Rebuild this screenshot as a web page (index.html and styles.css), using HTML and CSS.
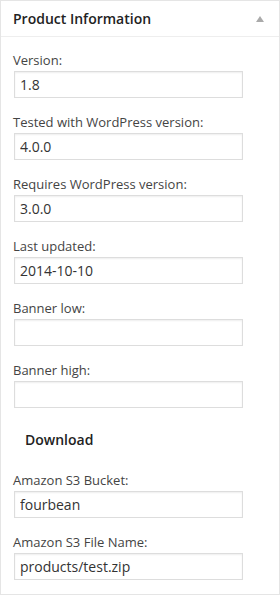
FILE: index.html
```html
<!DOCTYPE html>
<html lang="en">
<head>
    <meta charset="UTF-8">
    <meta name="viewport" content="width=device-width, initial-scale=1.0">
    <title>Product Information</title>
    <link rel="stylesheet" href="styles.css">
</head>
<body>

    <div class="postbox">
        <div class="hndle">
            <span>Product Information</span>
            <span class="toggleArrow"></span>
        </div>

        <div class="inside">
            <p class="field">
                <label for="version">Version:</label>
                <input type="text" id="version" value="1.8" />
            </p>
            <p class="field">
                <label for="tested">Tested with WordPress version:</label>
                <input type="text" id="tested" value="4.0.0" />
            </p>
            <p class="field">
                <label for="requires">Requires WordPress version:</label>
                <input type="text" id="requires" value="3.0.0" />
            </p>
            <p class="field">
                <label for="updated">Last updated:</label>
                <input type="text" id="updated" value="2014-10-10" />
            </p>
            <p class="field">
                <label for="bannerLow">Banner low:</label>
                <input type="text" id="bannerLow" value="" />
            </p>
            <p class="field">
                <label for="bannerHigh">Banner high:</label>
                <input type="text" id="bannerHigh" value="" />
            </p>

            <h4 class="sectionTitle">Download</h4>

            <p class="field">
                <label for="bucket">Amazon S3 Bucket:</label>
                <input type="text" id="bucket" value="fourbean" />
            </p>
            <p class="field">
                <label for="fileName">Amazon S3 File Name:</label>
                <input type="text" id="fileName" value="products/test.zip" />
            </p>
        </div>
    </div>

</body>
</html>
```

FILE: styles.css
```css
body {
    margin: 0;
    background-color: #fff;
    font-family: "Open Sans", sans-serif;
    color: #444;
}

.postbox {
    height: 595px;
    box-sizing: border-box;
    border: 1px solid #e5e5e5;
    background-color: #fff;
}

.hndle {
    display: flex;
    align-items: center;
    justify-content: space-between;
    height: 35px;
    padding: 0 12px;
    border-bottom: 1px solid #eee;
    font-size: 14px;
    font-weight: 600;
    color: #222;
}

.toggleArrow {
    width: 0;
    height: 0;
    margin: 1px 3px 0 0;
    border-left: 4px solid transparent;
    border-right: 4px solid transparent;
    border-bottom: 6px solid #aaa;
}

.inside {
    padding: 14px 12px 0;
}

.field {
    margin: 0 0 15px;
    font-size: 13px;
    line-height: 19px;
}

.field label {
    display: block;
}

.field input {
    display: block;
    width: 90%;
    height: 27px;
    box-sizing: border-box;
    margin: 1px 0 0 1px;
    padding: 3px 5px;
    border: 1px solid #ddd;
    box-shadow: inset 0 1px 2px rgba(0, 0, 0, 0.07);
    font-family: "Open Sans", sans-serif;
    font-size: 14px;
    color: #333;
    outline: none;
}

.sectionTitle {
    margin: 0 0 0 12px;
    padding: 8px 0 22px;
    font-size: 14px;
    font-weight: 600;
    line-height: 18px;
    color: #222;
}
```
